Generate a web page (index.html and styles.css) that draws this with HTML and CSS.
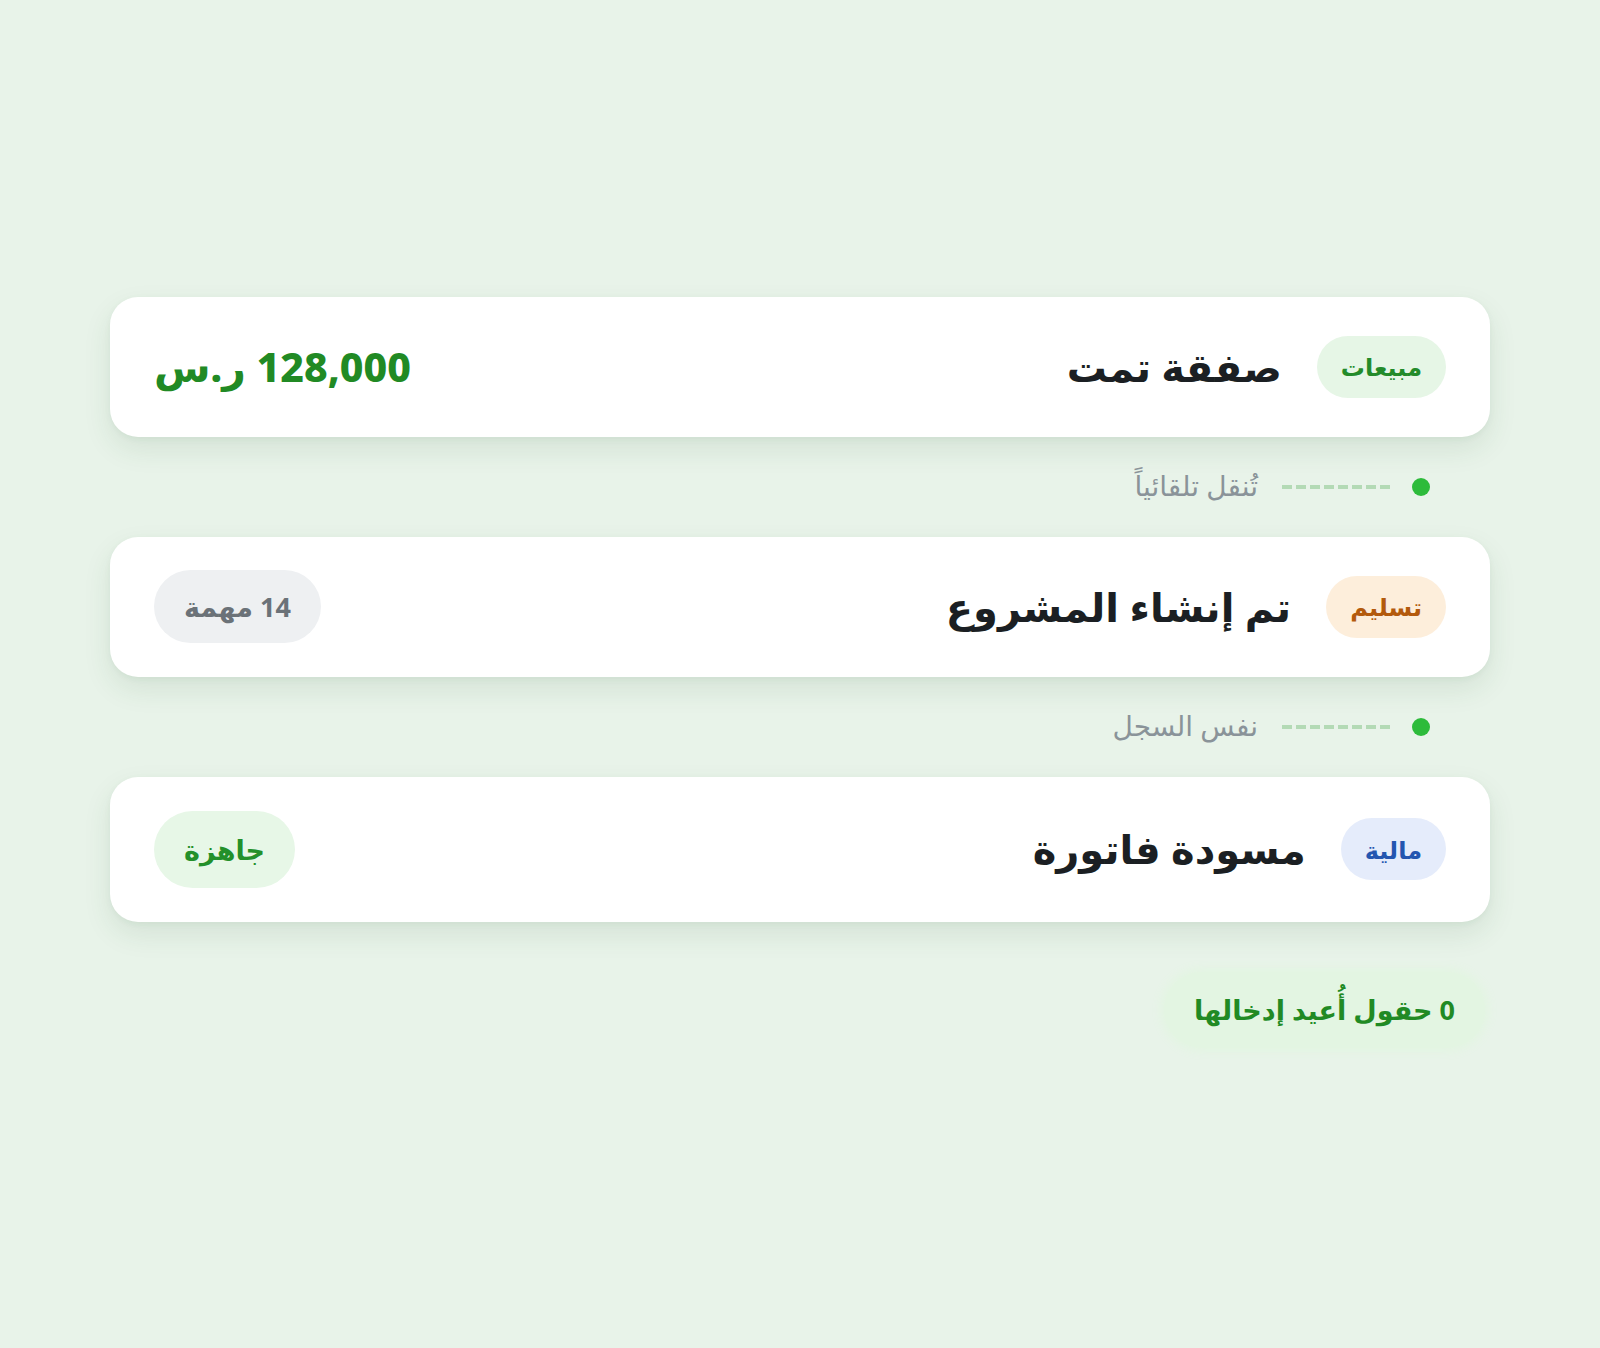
FILE: index.html
```html
<!DOCTYPE html>
<html lang="ar" dir="rtl">
<head>
<meta charset="utf-8">
<link rel="stylesheet" href="styles.css">
</head>
<body>
<main class="flow">
  <section class="card">
    <div class="head">
      <span class="badge badge-green">مبيعات</span>
      <h2 class="title">صفقة تمت</h2>
    </div>
    <div class="amount">128,000 ر.س</div>
  </section>

  <div class="link">
    <span class="dot"></span>
    <span class="dash"></span>
    <span class="link-text">تُنقل تلقائياً</span>
  </div>

  <section class="card">
    <div class="head">
      <span class="badge badge-orange">تسليم</span>
      <h2 class="title">تم إنشاء المشروع</h2>
    </div>
    <span class="pill pill-grey">14 مهمة</span>
  </section>

  <div class="link">
    <span class="dot"></span>
    <span class="dash"></span>
    <span class="link-text">نفس السجل</span>
  </div>

  <section class="card">
    <div class="head">
      <span class="badge badge-blue">مالية</span>
      <h2 class="title">مسودة فاتورة</h2>
    </div>
    <span class="pill pill-green">جاهزة</span>
  </section>

  <div class="summary-row">
    <span class="summary">0 حقول أُعيد إدخالها</span>
  </div>
</main>
</body>
</html>
```

FILE: styles.css
```css
* { box-sizing: border-box; }
html, body { margin: 0; padding: 0; }
body {
  background: #e8f3e9;
  font-family: "Noto Sans", "DejaVu Sans", sans-serif;
  color: #1d2125;
  min-height: 1348px;
  display: flex;
  align-items: center;
  justify-content: center;
}
.flow {
  width: 1380px;
  display: flex;
  flex-direction: column;
  margin-top: -4px;
}
.card {
  background: #ffffff;
  border-radius: 28px;
  padding: 0 44px;
  min-height: 140px;
  display: flex;
  align-items: center;
  justify-content: space-between;
  box-shadow: 0 12px 28px rgba(40, 90, 50, 0.10), 0 2px 6px rgba(40, 90, 50, 0.05);
}
.card:last-of-type { min-height: 145px; }
.head {
  display: flex;
  align-items: center;
  gap: 35px;
}
.title {
  margin: 0;
  font-size: 40px;
  font-weight: 800;
  color: #1b1f23;
  line-height: 1.2;
}
.badge {
  height: 62px;
  padding: 0 24px;
  border-radius: 31px;
  display: inline-flex;
  align-items: center;
  font-size: 24px;
  font-weight: 700;
}
.badge-green { background: #e6f6e6; color: #238b2a; }
.badge-orange { background: #fdeedb; color: #b35a0c; }
.badge-blue { background: #e5ecfb; color: #2456b0; }
.amount {
  font-size: 41px;
  font-weight: 800;
  color: #218a24;
  line-height: 1;
}
.pill {
  border-radius: 40px;
  display: inline-flex;
  align-items: center;
  padding: 0 30px;
  font-size: 27px;
  font-weight: 700;
}
.pill-grey { background: #eef0f2; color: #6b7278; height: 73px; }
.pill-green { background: #e7f7e7; color: #23902a; height: 77px; }
.link {
  height: 100px;
  display: flex;
  align-items: center;
  padding-right: 60px;
}
.dot {
  width: 18px;
  height: 18px;
  border-radius: 50%;
  background: #2dbb3b;
  flex: none;
}
.dash {
  width: 110px;
  height: 4px;
  margin: 0 22px;
  background: repeating-linear-gradient(to left, #b3dab5 0 10px, transparent 10px 14px);
  flex: none;
}
.link-text {
  font-size: 28px;
  color: #8a9399;
  line-height: 1;
  margin-top: -4px;
}
.summary-row {
  display: flex;
  padding-top: 50px;
  padding-right: 5px;
}
.summary {
  height: 76px;
  padding: 0 30px;
  border-radius: 38px;
  background: #e3f5e2;
  box-shadow: 0 0 10px 4px #e3f5e2;
  display: inline-flex;
  align-items: center;
  font-size: 27px;
  font-weight: 700;
  color: #218a24;
}
```
